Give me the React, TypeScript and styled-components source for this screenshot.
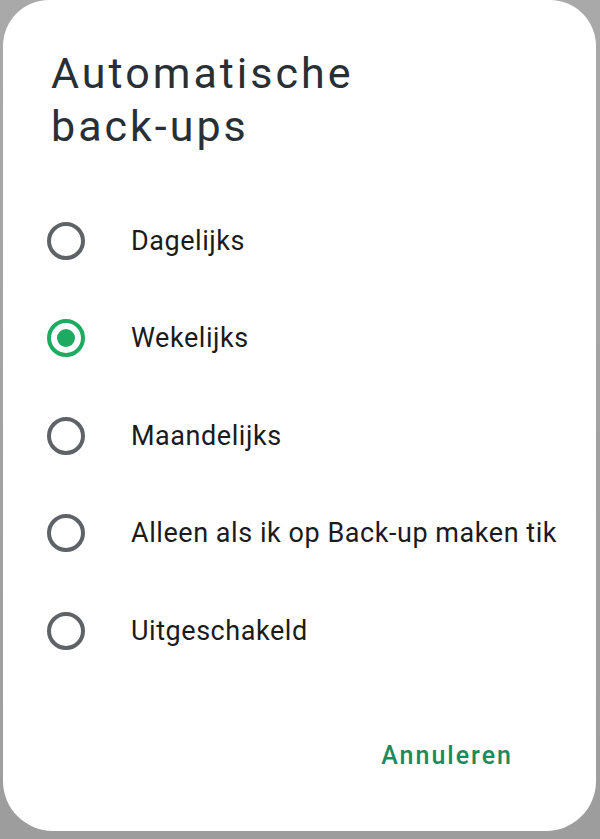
import { useState } from "react";
import styled, { createGlobalStyle } from "styled-components";

const GlobalStyle = createGlobalStyle`
    html, body {
        margin: 0;
        padding: 0;
        background: #a3a3a3;
        font-family: Roboto, "Noto Sans", Arial, sans-serif;
    }
`;

const Screen = styled.div`
    width: 600px;
    height: 839px;
    padding-left: 3px;
    box-sizing: border-box;
    background: linear-gradient(180deg, #a9a9a9 0%, #9d9d9d 100%);
`;

const Dialog = styled.div`
    width: 593px;
    height: 831px;
    box-sizing: border-box;
    background: #ffffff;
    border-radius: 46px 46px 50px 50px;
    padding: 47px 0 0 0;
    display: flex;
    flex-direction: column;
`;

const Title = styled.h2`
    margin: 0 0 39px;
    padding-left: 48px;
    font-size: 43px;
    line-height: 53px;
    font-weight: 400;
    letter-spacing: 3px;
    color: #283035;
    width: 360px;
`;

const Options = styled.div`
    display: flex;
    flex-direction: column;
`;

const OptionRow = styled.label`
    display: flex;
    align-items: center;
    height: 97.5px;
    padding-left: 44px;
    gap: 46px;
    cursor: pointer;
`;

const RadioCircle = styled.span<{ $checked: boolean }>`
    flex: none;
    width: 38px;
    height: 38px;
    box-sizing: border-box;
    border-radius: 50%;
    border: 4px solid ${(p) => (p.$checked ? "#1daa61" : "#5f6368")};
    display: flex;
    align-items: center;
    justify-content: center;
    &::after {
        content: "";
        width: 18px;
        height: 18px;
        border-radius: 50%;
        background: #1daa61;
        display: ${(p) => (p.$checked ? "block" : "none")};
    }
`;

const OptionLabel = styled.span`
    font-size: 27px;
    line-height: 32px;
    letter-spacing: 0.55px;
    color: #1b1b1b;
`;

const Footer = styled.div`
    display: flex;
    justify-content: flex-end;
    padding: 60px 83px 0 0;
`;

const TextButton = styled.button`
    border: none;
    background: none;
    padding: 0;
    font-family: Roboto, "Noto Sans", Arial, sans-serif;
    font-size: 25px;
    line-height: 32px;
    font-weight: 500;
    letter-spacing: 2px;
    color: #1e8a5c;
    cursor: pointer;
`;

const options = [
    "Dagelijks",
    "Wekelijks",
    "Maandelijks",
    "Alleen als ik op Back-up maken tik",
    "Uitgeschakeld",
];

const App = () => {
    const [selected, setSelected] = useState(1);
    return (
        <Screen>
            <GlobalStyle />
            <Dialog>
                <Title>Automatische back-ups</Title>
                <Options>
                    {options.map((opt, i) => (
                        <OptionRow key={opt} onClick={() => setSelected(i)}>
                            <RadioCircle $checked={selected === i} />
                            <OptionLabel>{opt}</OptionLabel>
                        </OptionRow>
                    ))}
                </Options>
                <Footer>
                    <TextButton>Annuleren</TextButton>
                </Footer>
            </Dialog>
        </Screen>
    );
};

export default App;
